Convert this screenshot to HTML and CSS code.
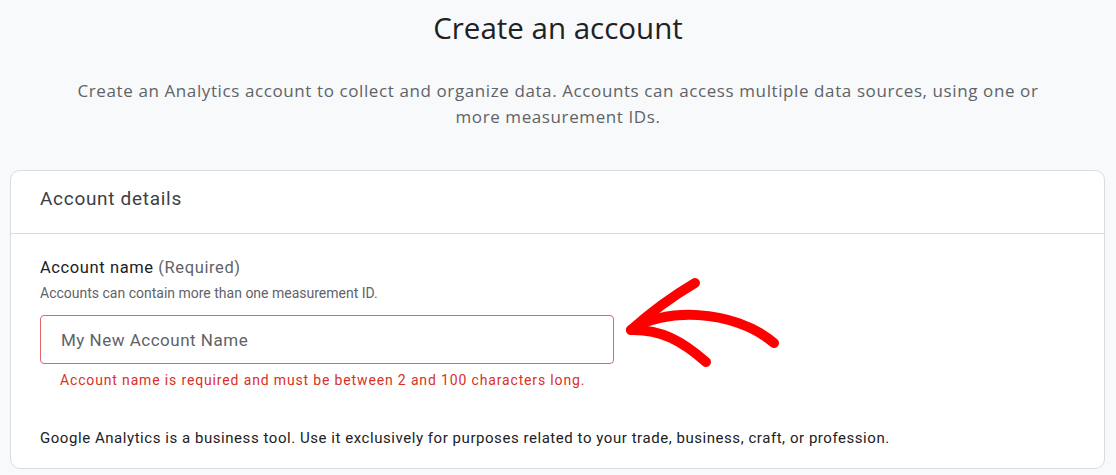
FILE: index.html
```html
<!DOCTYPE html>
<html lang="en">
<head>
<meta charset="utf-8">
<title>Create an account</title>
<link rel="stylesheet" href="styles.css">
</head>
<body>
<main class="page">
  <h1 class="title">Create an account</h1>
  <p class="intro">Create an Analytics account to collect and organize data. Accounts can access multiple data sources, using one or more measurement IDs.</p>
  <section class="card">
    <header class="card-head">Account details</header>
    <div class="card-body">
      <div class="field">
        <div class="label">Account name <span class="req">(Required)</span></div>
        <div class="hint">Accounts can contain more than one measurement ID.</div>
        <div class="input-row">
          <div class="input">My New Account Name</div>
          <svg class="arrow" width="170" height="100" viewBox="0 0 170 100" aria-hidden="true">
            <g fill="none" stroke="#ff0000" stroke-width="10" stroke-linecap="round" stroke-linejoin="round">
              <path d="M10 60 C 30 42, 52 26, 74 13"/>
              <path d="M10 60 C 40 38, 112 38, 153 73"/>
              <path d="M12 60 C 40 60, 60 70, 85 92"/>
            </g>
          </svg>
        </div>
        <div class="error">Account name is required and must be between 2 and 100 characters long.</div>
      </div>
      <p class="note">Google Analytics is a business tool. Use it exclusively for purposes related to your trade, business, craft, or profession.</p>
    </div>
  </section>
</main>
</body>
</html>
```
FILE: styles.css
```css
html, body {
  margin: 0;
  padding: 0;
  background: #f8f9fa;
}
.page {
  padding: 0 10px 0 10px;
  font-family: Roboto, "Liberation Sans", sans-serif;
}
.title {
  margin: 0;
  padding-top: 10px;
  text-align: center;
  font-family: "Open Sans", sans-serif;
  font-weight: 400;
  font-size: 29.5px;
  line-height: 36px;
  color: #202124;
}
.intro {
  margin: 32px auto 0;
  max-width: 990px;
  text-align: center;
  font-family: "Open Sans", sans-serif;
  font-size: 17px;
  letter-spacing: 0.6px;
  line-height: 26px;
  color: #5f6368;
}
.card {
  margin-top: 40px;
  background: #fff;
  border: 1px solid #dadce0;
  border-radius: 10px;
  width: 1095px;
  height: 299px;
  box-sizing: border-box;
}
.card-head {
  height: 63px;
  box-sizing: border-box;
  padding: 16px 29px 0;
  border-bottom: 1px solid #dadce0;
  font-size: 19px;
  letter-spacing: 0.7px;
  color: #3c4043;
}
.card-body {
  padding: 23px 29px 0;
}
.label {
  font-size: 16.5px;
  letter-spacing: 0.6px;
  line-height: 22px;
  color: #202124;
}
.req {
  color: #5f6368;
}
.hint {
  margin-top: 5px;
  font-size: 14px;
  line-height: 18px;
  color: #5f6368;
}
.input-row {
  display: flex;
  align-items: flex-start;
  margin-top: 13px;
  height: 49px;
}
.input {
  width: 574px;
  height: 49px;
  box-sizing: border-box;
  border: 1px solid #e06666;
  border-radius: 4px;
  padding: 0 20px;
  display: flex;
  align-items: center;
  font-size: 17px;
  letter-spacing: 0.5px;
  color: #5f6368;
}
.arrow {
  position: relative;
  top: -45px;
  left: 7px;
  flex: none;
}
.error {
  margin-top: 7px;
  padding-left: 20px;
  font-size: 14px;
  line-height: 18px;
  letter-spacing: 0.85px;
  color: #d93025;
}
.note {
  margin: 39px 0 0;
  font-size: 15px;
  line-height: 20px;
  letter-spacing: 0.55px;
  color: #202124;
}
```
